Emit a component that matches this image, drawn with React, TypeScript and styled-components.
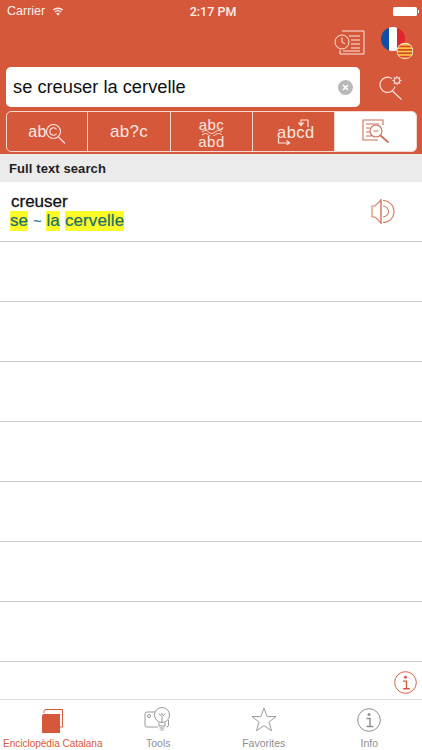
import { ReactNode } from "react";
import styled, { createGlobalStyle } from "styled-components";

const ORANGE = "#d5583a";
const LINE = "#c9c9c9";

const GlobalStyle = createGlobalStyle`
  html, body {
    margin: 0;
    padding: 0;
    background: #fff;
    font-family: "Liberation Sans", Arial, sans-serif;
  }
  * { box-sizing: border-box; }
`;

const Page = styled.div`
  width: 422px;
  height: 750px;
  display: flex;
  flex-direction: column;
  overflow: hidden;
`;

const Header = styled.header`
  height: 154px;
  background: ${ORANGE};
  display: flex;
  flex-direction: column;
  padding: 0 6px;
`;

const StatusBar = styled.div`
  height: 22px;
  display: grid;
  grid-template-columns: 1fr auto 1fr;
  align-items: center;
  color: #fbeee9;
  padding: 0 1px;
  font-size: 12.5px;
`;

const Carrier = styled.div`
  display: flex;
  align-items: center;
  gap: 7px;
`;

const Clock = styled.div`
  font-family: Roboto, sans-serif;
  font-weight: 500;
  font-size: 12.5px;
  margin-left: 4px;
`;

const Battery = styled.div`
  justify-self: end;
  margin-right: -2px;
  width: 24px;
  height: 9px;
  background: #fff;
  border-radius: 1.5px;
  position: relative;
  &::after {
    content: "";
    position: absolute;
    right: -2px;
    top: 3px;
    width: 1.5px;
    height: 3px;
    background: #fff;
  }
`;

const ToolRow = styled.div`
  height: 45px;
  display: flex;
  align-items: flex-start;
  justify-content: flex-end;
  gap: 16px;
  padding: 5px 3px 0 0;
`;

const HistoryButton = styled.div`
  margin-top: 3px;
`;

const SearchRow = styled.div`
  display: flex;
  align-items: center;
  height: 40px;
`;

const SearchField = styled.div`
  width: 354px;
  height: 40px;
  background: #fff;
  border-radius: 5px;
  display: flex;
  align-items: center;
  justify-content: space-between;
  padding: 0 7px 0 7px;
  font-size: 18.3px;
  color: #111;
`;

const ClearButton = styled.div`
  width: 15px;
  height: 15px;
  border-radius: 50%;
  background: #b9b9b9;
  display: flex;
  align-items: center;
  justify-content: center;
`;

const SearchOptions = styled.div`
  flex: 1;
  display: flex;
  padding: 0 0 0 19px;
`;

const Segments = styled.div`
  margin-top: 4px;
  height: 41px;
  width: 411px;
  display: grid;
  grid-template-columns: 81px 83px 82px 82px 1fr;
  border: 1px solid #f6d8d0;
  border-radius: 5px;
  overflow: hidden;
`;

const Segment = styled.div<{ $active?: boolean }>`
  display: flex;
  align-items: center;
  justify-content: center;
  color: #fbe6e0;
  font-size: 17px;
  background: ${(p) => (p.$active ? "#fff" : "transparent")};
  border-right: ${(p) => (p.$active ? "none" : "1px solid #f6d8d0")};
`;

const SegmentText = styled.span`
  letter-spacing: 0.3px;
`;

const MagnifyPair = styled.div`
  display: flex;
  align-items: center;
  font-size: 16px;
`;

const MagnifierWrap = styled.div`
  margin: 5px 0 0 -1px;
`;

const Stacked = styled.div`
  display: flex;
  flex-direction: column;
  align-items: center;
  line-height: 11px;
  font-size: 15px;
  letter-spacing: 0.5px;
  margin-top: 3px;
`;

const SwapStack = styled.div`
  display: flex;
  flex-direction: column;
  width: 33px;
  line-height: 11px;
  font-size: 16.5px;
  letter-spacing: 0.5px;
`;

const SwapArrow = styled.div<{ $end?: boolean }>`
  align-self: ${(p) => (p.$end ? "flex-end" : "flex-start")};
`;

const SectionTitle = styled.div`
  height: 28px;
  background: #ebebeb;
  display: flex;
  align-items: center;
  padding-left: 9px;
  font-size: 13px;
  font-weight: 700;
  color: #222;
  letter-spacing: 0.1px;
`;

const List = styled.div`
  display: flex;
  flex-direction: column;
`;

const Row = styled.div`
  height: 60px;
  border-bottom: 1px solid ${LINE};
  display: flex;
  align-items: center;
  justify-content: space-between;
  padding: 0 27px 0 10px;
  flex-shrink: 0;
`;

const Entry = styled.div`
  display: flex;
  flex-direction: column;
`;

const Headword = styled.div`
  font-size: 17px;
  color: #111;
  line-height: 19px;
  margin-left: 1px;
  -webkit-text-stroke: 0.3px #111;
`;

const Translation = styled.div`
  font-size: 17px;
  line-height: 20px;
  display: flex;
  gap: 5px;
  align-items: center;
  letter-spacing: 0.1px;
  -webkit-text-stroke: 0.2px #1b6e6a;
`;

const Mark = styled.mark`
  background: #fbfb2a;
  color: #1b6e6a;
  padding: 0;
`;

const Tilde = styled.span`
  font-size: 14px;
  color: #2b78a8;
`;

const InfoRow = styled.div`
  flex: 1;
  display: flex;
  align-items: center;
  justify-content: flex-end;
  padding: 3px 5px 0 0;
`;

const TabBar = styled.nav`
  height: 51px;
  border-top: 1px solid #dcdcdc;
  display: grid;
  grid-template-columns: repeat(4, 1fr);
  background: #fff;
`;

const Tab = styled.div<{ $active?: boolean }>`
  display: flex;
  flex-direction: column;
  align-items: center;
  justify-content: flex-end;
  padding-bottom: 1px;
  gap: 5px;
  font-size: ${(p) => (p.$active ? "10px" : "10.5px")};
  color: ${(p) => (p.$active ? ORANGE : "#8f8f8f")};
  white-space: nowrap;
`;

function Icon({ w, h, children, stroke = "#fbe6e0", sw = 1 }: { w: number; h: number; children: ReactNode; stroke?: string; sw?: number }) {
  return (
    <svg width={w} height={h} viewBox={`0 0 ${w} ${h}`} fill="none" stroke={stroke} strokeWidth={sw} style={{ display: "block" }}>
      {children}
    </svg>
  );
}

const WifiIcon = () => (
  <svg width="12" height="9" viewBox="0 0 14 10" fill="#fbeee9">
    <path d="M7 10 4.8 7.3a3.4 3.4 0 0 1 4.4 0z" />
    <path d="M3.9 6.2 2.9 5a6.3 6.3 0 0 1 8.2 0l-1 1.2a4.7 4.7 0 0 0-6.2 0z" />
    <path d="M2 3.9 1 2.7a9.2 9.2 0 0 1 12 0l-1 1.2a7.6 7.6 0 0 0-10 0z" />
  </svg>
);

const HistoryIcon = () => (
  <Icon w={31} h={25}>
    <path d="M8 1h22v23H6v-4" />
    <path d="M15 6h11M17 10h9M17 14h9M17 18h9M9 21h17" />
    <circle cx="8" cy="12" r="7" />
    <path d="M8 7.5V12l3 2" />
  </Icon>
);

const FlagIcon = () => (
  <svg width="32" height="33" viewBox="0 0 32 33" style={{ display: "block" }}>
    <defs>
      <clipPath id="fr"><circle cx="12" cy="12" r="12" /></clipPath>
      <clipPath id="cat"><circle cx="24" cy="24" r="7.5" /></clipPath>
    </defs>
    <g clipPath="url(#fr)">
      <rect x="0" y="0" width="8" height="24" fill="#0d4fa6" />
      <rect x="8" y="0" width="8" height="24" fill="#fff" />
      <rect x="16" y="0" width="8" height="24" fill="#e0252c" />
    </g>
    <circle cx="24" cy="24" r="8.3" fill="#fff" opacity="0.9" />
    <g clipPath="url(#cat)">
      <rect x="16" y="16" width="17" height="17" fill="#f8c93a" />
      <rect x="16" y="18.6" width="17" height="1.7" fill="#d9452f" />
      <rect x="16" y="22" width="17" height="1.7" fill="#d9452f" />
      <rect x="16" y="25.4" width="17" height="1.7" fill="#d9452f" />
      <rect x="16" y="28.8" width="17" height="1.7" fill="#d9452f" />
    </g>
  </svg>
);

const SearchGearIcon = () => (
  <Icon w={25} h={25} sw={1.1}>
    <path d="M13 3.6A7.6 7.6 0 1 0 16 11.5" />
    <path d="m13.5 16 9 8.5" />
    <circle cx="18" cy="5.5" r="2.8" />
    <path d="M18 1v1.5M18 8.5V10M13.5 5.5H15M21 5.5h1.5M14.8 2.3l1 1M20.2 7.7l1 1M14.8 8.7l1-1M20.2 3.3l1-1" />
  </Icon>
);

const CMagnifier = () => (
  <Icon w={20} h={20} sw={1.1}>
    <circle cx="7.5" cy="7.5" r="7" />
    <path d="m12.5 13 6.5 6.5" />
    <path d="M10.5 5.3A3.7 3.7 0 1 0 10.5 9.7" />
  </Icon>
);

const Wave = () => (
  <Icon w={22} h={6}>
    <path d="M1 2c3-2 4.500-2 6.500 0s4 2 6.500 0 5-2 7 0" />
    <path d="M1 5c3-2 4.500-2 6.500 0s4 2 6.500 0 5-2 7 0" />
  </Icon>
);

const ArrowTop = () => (
  <Icon w={14} h={8} sw={1.2}>
    <path d="M12 8V1H5v5M2.500 3.500 5 6.500l2.500-3" />
  </Icon>
);

const ArrowBottom = () => (
  <Icon w={14} h={7} sw={1.2}>
    <path d="M1.500 0v5h11M9.500 2.500l3 2.500-3 2" />
  </Icon>
);

const FullTextIcon = () => (
  <Icon w={29} h={25} stroke="#c9715c" sw={1.1}>
    <path d="M17 21H2V1h20v5" />
    <path d="M5 5h13M5 9h4M5 13h4M5 17h6" />
    <circle cx="15" cy="12" r="6" />
    <path d="M12.500 12h5" />
    <path d="m19.500 16.500 8 7" strokeWidth="1.8" />
  </Icon>
);

const SpeakerIcon = () => (
  <Icon w={24} h={25} stroke="#d5826c" sw={1.1}>
    <path d="M10 1 4 7H1v11h3l6 6z" />
    <path d="M10 0v25" />
    <path d="M12 7a5.500 5.500 0 0 1 0 11" />
    <path d="M12 1.500a11 11 0 0 1 0 22" />
  </Icon>
);

const InfoIcon = ({ size, color }: { size: number; color: string }) => (
  <svg width={size} height={size} viewBox="0 0 24 24" fill="none" stroke={color} strokeWidth="1" style={{ display: "block" }}>
    <circle cx="12" cy="12" r="11.300" />
    <circle cx="12" cy="6.500" r="1.500" fill={color} stroke="none" />
    <path d="M9.500 10.500H13v8M9.500 18.500h7" strokeWidth="1.400" />
  </svg>
);

const BookIcon = () => (
  <svg width="21" height="24" viewBox="0 0 21 24" style={{ display: "block" }}>
    <path d="M2 4V2.500A2 2 0 0 1 4 .5H20.500V18H18" fill="none" stroke={ORANGE} strokeWidth="1" />
    <path d="M2 5h16v19H0V7a2 2 0 0 1 2-2z" fill={ORANGE} />
  </svg>
);

const ToolsIcon = () => (
  <Icon w={28} h={25} stroke="#8f8f8f" sw={0.9}>
    <path d="M11 5H3a2 2 0 0 0-2 2v11a2 2 0 0 0 2 2h11" />
    <path d="M24.500 13v5a2 2 0 0 1-2 2" />
    <circle cx="5" cy="9" r="1.500" />
    <circle cx="18" cy="8" r="7.500" />
    <path d="M15 15.500v3.500h6v-3.500M15.500 21h5M16.500 23h3M14.500 6.500l2 2 1.500-2 1.500 2 2-2M18 8.500v6.500" />
  </Icon>
);

const StarIcon = () => (
  <Icon w={26} h={25} stroke="#8f8f8f" sw={0.9}>
    <path d="M13 1.200 16.200 9.600H25l-7 5.400 2.500 8.800L13 18.600l-7.500 5.200L8 15 1 9.600h8.800z" />
  </Icon>
);

const rows = [0, 1, 2, 3, 4, 5, 6];

export default function App() {
  return (
    <Page>
      <GlobalStyle />
      <Header>
        <StatusBar>
          <Carrier>
            Carrier
            <WifiIcon />
          </Carrier>
          <Clock>2:17 PM</Clock>
          <Battery />
        </StatusBar>
        <ToolRow>
          <HistoryButton>
            <HistoryIcon />
          </HistoryButton>
          <FlagIcon />
        </ToolRow>
        <SearchRow>
          <SearchField>
            se creuser la cervelle
            <ClearButton>
              <svg width="7" height="7" viewBox="0 0 7 7" stroke="#fff" strokeWidth="1.6">
                <path d="m1 1 5 5M6 1 1 6" />
              </svg>
            </ClearButton>
          </SearchField>
          <SearchOptions>
            <SearchGearIcon />
          </SearchOptions>
        </SearchRow>
        <Segments>
          <Segment>
            <MagnifyPair>
              <SegmentText>ab</SegmentText>
              <MagnifierWrap>
                <CMagnifier />
              </MagnifierWrap>
            </MagnifyPair>
          </Segment>
          <Segment>
            <SegmentText>ab?c</SegmentText>
          </Segment>
          <Segment>
            <Stacked>
              <span>abc</span>
              <Wave />
              <span>abd</span>
            </Stacked>
          </Segment>
          <Segment>
            <SwapStack>
              <SwapArrow $end>
                <ArrowTop />
              </SwapArrow>
              <span>abcd</span>
              <SwapArrow>
                <ArrowBottom />
              </SwapArrow>
            </SwapStack>
          </Segment>
          <Segment $active>
            <FullTextIcon />
          </Segment>
        </Segments>
      </Header>
      <SectionTitle>Full text search</SectionTitle>
      <List>
        <Row>
          <Entry>
            <Headword>creuser</Headword>
            <Translation>
              <Mark>se</Mark>
              <Tilde>~</Tilde>
              <Mark>la</Mark>
              <Mark>cervelle</Mark>
            </Translation>
          </Entry>
          <SpeakerIcon />
        </Row>
        {rows.map((r) => (
          <Row key={r} />
        ))}
      </List>
      <InfoRow>
        <InfoIcon size={23} color={ORANGE} />
      </InfoRow>
      <TabBar>
        <Tab $active>
          <BookIcon />
          Enciclopèdia Catalana
        </Tab>
        <Tab>
          <ToolsIcon />
          Tools
        </Tab>
        <Tab>
          <StarIcon />
          Favorites
        </Tab>
        <Tab>
          <InfoIcon size={24} color="#8f8f8f" />
          Info
        </Tab>
      </TabBar>
    </Page>
  );
}
